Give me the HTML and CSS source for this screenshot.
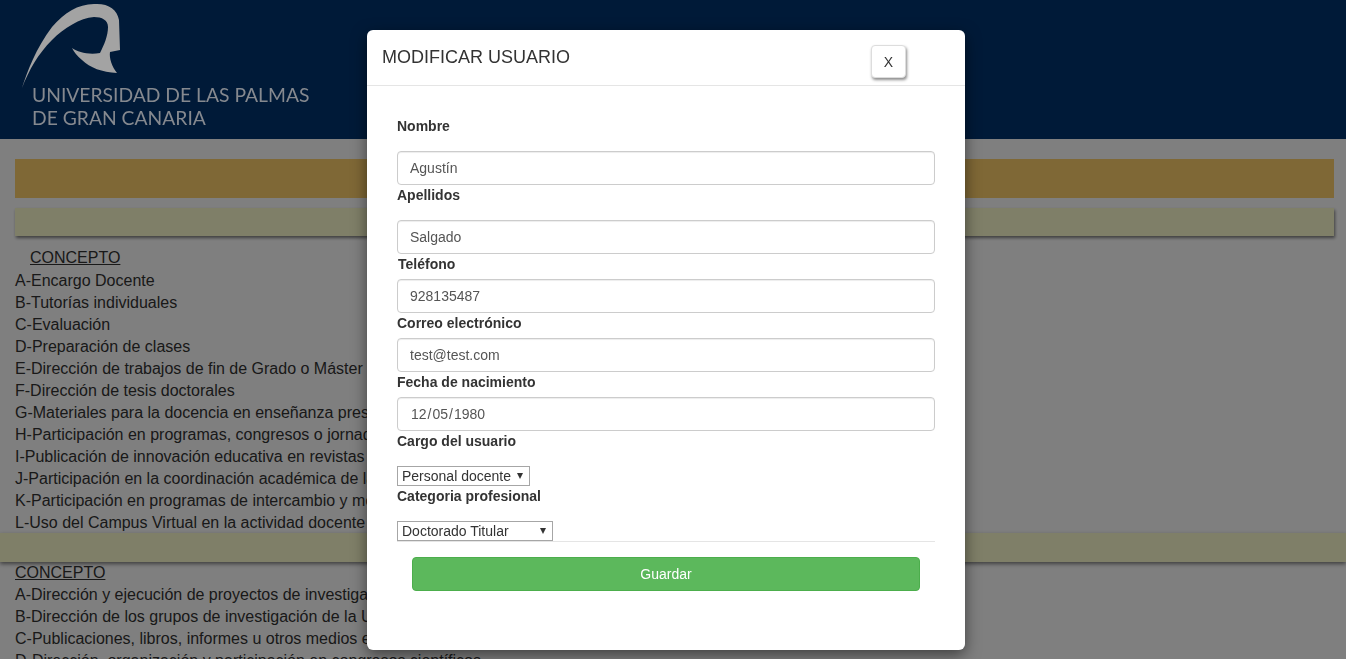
FILE: index.html
```html
<!DOCTYPE html>
<html lang="es">
<head>
<meta charset="utf-8">
<title>Modificar usuario</title>
<link rel="stylesheet" href="styles.css">
</head>
<body>
<header class="site-header">
  <div class="logo">
    <svg class="logo-mark" width="110" height="90" viewBox="0 0 110 90" aria-hidden="true">
      <path d="M0 88 C5 72 14 48 30 27 C42 13 56 4 72 4 C86 3 95 9 97 20 L98 50 L88 52 C87 58 90 67 95 73 C80 72 68 68 60 60 C55 56 52 52 50 48 C56 52 66 55 78 53 C82 45 86 36 86 27 C86 20 80 17 72 17 C58 18 42 28 30 40 C16 54 7 70 0 88 Z" fill="#a3a3a3"/>
    </svg>
    <div class="logo-text">UNIVERSIDAD DE LAS PALMAS<br>DE GRAN CANARIA</div>
  </div>
</header>
<main class="content">
  <div class="bar bar-orange"></div>
  <div class="bar bar-green"></div>
  <section class="concepts">
    <div class="concept-title indented">CONCEPTO</div>
    <div>A-Encargo Docente</div>
    <div>B-Tutorías individuales</div>
    <div>C-Evaluación</div>
    <div>D-Preparación de clases</div>
    <div>E-Dirección de trabajos de fin de Grado o Máster</div>
    <div>F-Dirección de tesis doctorales</div>
    <div>G-Materiales para la docencia en enseñanza presencial</div>
    <div>H-Participación en programas, congresos o jornadas</div>
    <div>I-Publicación de innovación educativa en revistas</div>
    <div>J-Participación en la coordinación académica de la titulación</div>
    <div>K-Participación en programas de intercambio y movilidad</div>
    <div>L-Uso del Campus Virtual en la actividad docente</div>
  </section>
  <div class="bar-wide"></div>
  <section class="concepts">
    <div class="concept-title">CONCEPTO</div>
    <div>A-Dirección y ejecución de proyectos de investigación</div>
    <div>B-Dirección de los grupos de investigación de la Universidad</div>
    <div>C-Publicaciones, libros, informes u otros medios escritos</div>
    <div>D-Dirección, organización y participación en congresos científicos</div>
  </section>
</main>
<div class="backdrop"></div>
<div class="modal">
  <div class="modal-header">
    <h4 class="modal-title">MODIFICAR USUARIO</h4>
    <button class="close-btn" type="button">X</button>
  </div>
  <form class="modal-body">
    <label class="field-label gap-large">Nombre</label>
    <input class="field" type="text" value="Agustín">
    <label class="field-label gap-large">Apellidos</label>
    <input class="field" type="text" value="Salgado">
    <label class="field-label shifted">Teléfono</label>
    <input class="field" type="text" value="928135487">
    <label class="field-label">Correo electrónico</label>
    <input class="field" type="text" value="test@test.com">
    <label class="field-label">Fecha de nacimiento</label>
    <input class="field field-date" type="date" value="1980-12-05">
    <label class="field-label gap-large">Cargo del usuario</label>
    <div class="select-wrap select-short">
      <select class="select"><option>Personal docente</option></select>
      <svg class="select-arrow" width="6" height="6" viewBox="0 0 6 6" aria-hidden="true"><path d="M0 0H6L3 6Z" fill="#333"/></svg>
    </div>
    <label class="field-label gap-large">Categoria profesional</label>
    <div class="select-wrap select-long">
      <select class="select"><option>Doctorado Titular</option></select>
      <svg class="select-arrow" width="6" height="6" viewBox="0 0 6 6" aria-hidden="true"><path d="M0 0H6L3 6Z" fill="#333"/></svg>
    </div>
    <div class="form-footer">
      <button class="save-btn" type="button">Guardar</button>
    </div>
  </form>
</div>
</body>
</html>
```
FILE: styles.css
```css
* { box-sizing: border-box; }
html, body { height: 100%; }
body {
  margin: 0;
  overflow: hidden;
  background: #fff;
  color: #333;
  font-family: "Liberation Sans", Arial, sans-serif;
  font-size: 14px;
  line-height: 20px;
}
.site-header {
  height: 139px;
  background: #003470;
}
.logo {
  position: relative;
  z-index: 20;
  padding-left: 22px;
  height: 139px;
}
.logo-mark { display: block; }
.logo-text {
  position: absolute;
  left: 32px;
  top: 83px;
  font-family: Lato, "Liberation Sans", sans-serif;
  font-size: 19.3px;
  line-height: 23px;
  color: #85898f;
  white-space: nowrap;
}
.content { padding-top: 20px; }
.bar { margin: 0 12px 0 15px; }
.bar-orange { height: 39px; background: #ffd06c; }
.bar-green {
  height: 28px;
  margin-top: 10px;
  background: #fffed0;
  box-shadow: 1px 2px 3px rgba(0,0,0,.5);
}
.concepts {
  padding-left: 15px;
  font-size: 16px;
  line-height: 22px;
}
.bar-green + .concepts { padding-top: 11px; }
.concept-title { text-decoration: underline; }
.indented { padding-left: 15px; margin-bottom: 1px; }
.bar-wide {
  height: 29px;
  margin-top: -1px;
  background: #fffed0;
  box-shadow: 0 2px 4px rgba(0,0,0,.5);
}
.backdrop {
  position: fixed;
  inset: 0;
  z-index: 10;
  background: rgba(0,0,0,.5);
}
.modal {
  position: fixed;
  z-index: 30;
  left: 367px;
  top: 30px;
  width: 598px;
  height: 620px;
  background: #fff;
  border-radius: 6px;
  box-shadow: 0 5px 15px rgba(0,0,0,.5);
}
.modal-header {
  display: flex;
  height: 56px;
  padding: 15px 59px 0 15px;
  justify-content: space-between;
  border-bottom: 1px solid #e5e5e5;
}
.modal-title {
  margin: 0;
  padding-top: 1px;
  font-size: 18px;
  font-weight: 500;
  line-height: 22px;
}
.close-btn {
  width: 35px;
  height: 33px;
  padding: 0;
  background: #fff;
  border: 1px solid #ddd;
  border-radius: 4px;
  box-shadow: 1px 2px 3px rgba(0,0,0,.45);
  color: #333;
  font: 14px/20px "Liberation Sans", Arial, sans-serif;
}
.modal-body {
  display: flex;
  flex-direction: column;
  align-items: flex-start;
  padding: 30px 30px 0;
}
.field-label {
  display: block;
  margin-bottom: 5px;
  font-weight: 700;
}
.gap-large { margin-bottom: 15px; }
.shifted { margin-left: 1px; }
.field {
  display: block;
  width: 538px;
  height: 34px;
  padding: 6px 12px;
  background: #fff;
  border: 1px solid #ccc;
  border-radius: 4px;
  box-shadow: inset 0 1px 1px rgba(0,0,0,.075);
  color: #555;
  font: 14px/20px "Liberation Sans", Arial, sans-serif;
}
.field-date::-webkit-calendar-picker-indicator { display: none; }
.select-wrap { position: relative; height: 20px; }
.select-short { width: 133px; }
.select-long { width: 156px; }
.select {
  display: block;
  width: 100%;
  height: 20px;
  padding: 0 0 0 4px;
  appearance: none;
  background: #fff;
  border: 1px solid #a6a6a6;
  border-radius: 0;
  color: #333;
  font: 14px/18px "Liberation Sans", Arial, sans-serif;
}
.select-arrow { position: absolute; top: 7px; right: 7px; }
.form-footer {
  width: 538px;
  padding: 15px 15px 0;
  border-top: 1px solid #e5e5e5;
}
.save-btn {
  display: block;
  width: 100%;
  height: 34px;
  padding: 0;
  background: #5cb85c;
  border: 1px solid #4cae4c;
  border-radius: 4px;
  color: #fff;
  font: 14px/20px "Liberation Sans", Arial, sans-serif;
}
```
